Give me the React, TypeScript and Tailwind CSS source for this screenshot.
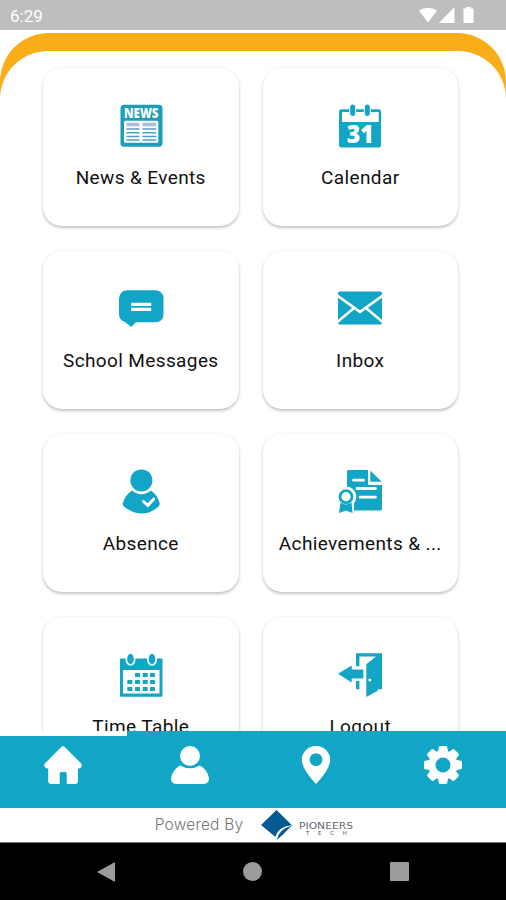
import type { ReactNode } from "react";

const TEAL = "#12a6c6";

const NewsIcon = () => (
  <svg viewBox="0 0 44 44" className="size-11 overflow-visible">
    <rect x="1.5" y="0.8" width="42" height="42" rx="3.5" fill="#1b9dbd" />
    <text
      x="5"
      y="13.6"
      fontFamily="Open Sans, sans-serif"
      fontSize="13.5"
      fontWeight="800"
      fill="#fff"
      textLength="34.5"
      lengthAdjust="spacingAndGlyphs"
    >
      NEWS
    </text>
    <rect x="5" y="16.7" width="34.3" height="22" rx="1.5" fill="#fff" />
    <path d="M7.5 20.5h13M23.5 20.5h13.7" stroke="#a5bfdd" strokeWidth="3.6" />
    <path
      d="M7.5 25h13M23.5 25h13.7M7.5 28.7h13M23.5 28.7h13.7M7.5 32.4h13M23.5 32.4h13.7M7.5 36h13M23.5 36h13.7"
      stroke="#4ba3bd"
      strokeWidth="1.5"
    />
  </svg>
);

const CalendarIcon = () => (
  <svg viewBox="0 0 44 44" className="size-11 overflow-visible">
    <rect x="1" y="5.2" width="42" height="38.2" rx="2.5" fill={TEAL} />
    <rect x="4" y="8" width="36.7" height="10" fill="#fff" />
    {[14.7, 29.3].map((x) => (
      <rect
        key={x}
        x={x - 3}
        y="0"
        width="6"
        height="12.5"
        rx="3"
        fill={TEAL}
        stroke="#fff"
        strokeWidth="1"
      />
    ))}
    <text
      x="8.7"
      y="38.7"
      fontFamily="Open Sans, sans-serif"
      fontSize="24"
      fontWeight="800"
      fill="#fff"
      textLength="27"
      lengthAdjust="spacingAndGlyphs"
    >
      31
    </text>
  </svg>
);

const MessageIcon = () => (
  <svg viewBox="0 0 44 44" className="size-11 overflow-visible">
    <path
      d="M8 3.3h28.5a8 8 0 0 1 8 7V28a7.5 7.5 0 0 1-7.5 7.3H17L12.2 40 6 35Q0 33 0 27V11.5a8 8 0 0 1 8-8.2z"
      fill={TEAL}
    />
    <path d="M12.2 17.4h20M12.2 22.4h20" stroke="#fff" strokeWidth="3.3" />
  </svg>
);

const InboxIcon = () => (
  <svg viewBox="0 0 44 44" className="size-11">
    <rect y="4.5" width="44" height="33" rx="1.5" fill={TEAL} />
    <path
      d="M-1 8.5 22 24.8 45 8.5M-1 35.2 15.5 21.5M45 35.2 28.5 21.5"
      fill="none"
      stroke="#fff"
      strokeWidth="2.6"
    />
  </svg>
);

const AbsenceIcon = () => (
  <svg viewBox="0 0 44 44" className="size-11 overflow-visible">
    <circle cx="22.4" cy="10.4" r="11" fill={TEAL} />
    <path
      d="M13 20.4q9.4 7.6 18.8 0 6.8 4.4 8.9 12.8.3 2-1.4 3.6-15.8 13.6-34.2 0-1.7-1.6-1.4-3.6 2.5-8.4 9.3-12.8z"
      fill={TEAL}
    />
    <path
      d="M24.5 31.5 28.8 35.3 34.8 29"
      fill="none"
      stroke="#fff"
      strokeWidth="3"
      strokeLinecap="round"
    />
  </svg>
);

const CertificateIcon = () => (
  <svg viewBox="0 0 44 44" className="size-11">
    <path
      d="M10.5 0H30v15h14v24a1.5 1.5 0 0 1-1.5 1.5H9V1.5A1.5 1.5 0 0 1 10.5 0z"
      fill={TEAL}
    />
    <path d="M32.3.5 43.7 11.8H32.3z" fill={TEAL} />
    <path
      d="M15.5 10.2h10M19 18.5h18.5M22 27.2h15.5"
      stroke="#fff"
      strokeWidth="2.8"
      strokeLinecap="round"
    />
    <circle cx="8" cy="26.7" r="10.3" fill="#fff" />
    <path d="M0 30h16v14H0z" fill="#fff" />
    <circle cx="8" cy="26.7" r="6" fill="none" stroke={TEAL} strokeWidth="2.8" />
    <path d="M2.5 32.5q5.5 4 11 0L14.5 43 8 40.5 1 43z" fill={TEAL} />
  </svg>
);

const TimeTableIcon = () => (
  <svg viewBox="0 0 44 44" className="size-11">
    <rect x="1" y="5.5" width="42.5" height="38.2" rx="1" fill={TEAL} />
    <rect x="4" y="17" width="36.5" height="23.5" fill="#fff" />
    {[11.5, 33].map((x) => (
      <ellipse
        key={x}
        cx={x}
        cy="6"
        rx="4.2"
        ry="6"
        fill={TEAL}
        stroke="#fff"
        strokeWidth="1.7"
      />
    ))}
    {[22, 29, 36].map((y, row) =>
      [10.8, 18.5, 26.2, 33.5].map(
        (x, col) =>
          !(row === 0 && col === 0) && (
            <rect
              key={`${x}-${y}`}
              x={x - 2.5}
              y={y - 2.1}
              width="5"
              height="4.2"
              rx="0.5"
              fill={TEAL}
            />
          )
      )
    )}
  </svg>
);

const LogoutIcon = () => (
  <svg viewBox="0 0 44 44" className="size-11">
    <path
      d="M18 .3h26v36h-4.3v1.4L28.3 44V11.2L38 3.5H21.4v9.8H18zM18 28h3.4v8.3H18z"
      fill={TEAL}
    />
    <path d="M0 20.7 13.7 12.5v4h11.7v9H13.7v4z" fill={TEAL} />
    <circle cx="31.8" cy="27" r="1.5" fill="#fff" />
  </svg>
);

const HomeIcon = () => (
  <svg viewBox="0 0 38 38" className="size-[38px]">
    <path
      d="M17.5.8q1.5-1.4 3 0l16.700 16.700q1.500 2-.5 4.200-.8.900-2.700.8V35q0 3-3 3h-8.300V27.500q0-1.500-1.500-1.500h-4q-1.500 0-1.500 1.500V38H7.200q-3 0-3-3V22.500q-2 .1-2.800-.8-2-2.200-.5-4.200z"
      fill="#fff"
    />
  </svg>
);

const ProfileIcon = () => (
  <svg viewBox="0 0 38 38" className="size-[38px]">
    <circle cx="19" cy="10" r="10" fill="#fff" />
    <path
      d="M9 19.5q10 5.500 20 0 7.500 4.500 9 12.500.3 6-6 6H6q-6.300 0-6-6 1.500-8 9-12.500z"
      fill="#fff"
    />
  </svg>
);

const PinIcon = () => (
  <svg viewBox="0 0 38 38" className="size-[38px]">
    <path
      fillRule="evenodd"
      d="M19 0a14 14 0 0 1 14.2 14Q33 23 19 38 5 23 4.8 14A14 14 0 0 1 19 0zm0 7.2a6.400 6.400 0 1 0 0 12.800 6.400 6.400 0 0 0 0-12.800z"
      fill="#fff"
    />
  </svg>
);

const SettingsIcon = () => (
  <svg viewBox="0 0 38 38" className="size-[38px]">
    {[0, 45, 90, 135, 180, 225, 270, 315].map((angle) => (
      <path
        key={angle}
        d="M13.500 8 14.800 1q.3-1 1.300-1h5.800q1 0 1.300 1l1.300 7z"
        transform={`rotate(${angle} 19 19)`}
        fill="#fff"
      />
    ))}
    <circle cx="19" cy="19" r="11" fill="none" stroke="#fff" strokeWidth="7" />
  </svg>
);

const PioneersLogo = () => (
  <svg viewBox="0 0 94 32" className="h-8 w-[94px]">
    <path d="M15.5 1 31 16.3Q17 18 14.500 28L0 16z" fill="#065a94" />
    <path d="M31 16.300Q18 20 15.800 31L22 25.500z" fill="#065a94" />
    <path d="M31 16.300Q16 18.500 14.300 29q4-8.500 16.700-12.700z" fill="#fff" />
    <text
      x="38"
      y="19.7"
      fontFamily="DejaVu Sans, sans-serif"
      fontSize="9.5"
      fill="#626873"
      textLength="54"
      lengthAdjust="spacingAndGlyphs"
    >
      PIONEERS
    </text>
    <text
      x="45"
      y="25.5"
      fontFamily="DejaVu Sans, sans-serif"
      fontSize="5.5"
      fill="#3f4550"
      textLength="41"
    >
      TECH
    </text>
  </svg>
);

interface MenuItem {
  label: string;
  icon: ReactNode;
}

const menuItems: MenuItem[] = [
  { label: "News & Events", icon: <NewsIcon /> },
  { label: "Calendar", icon: <CalendarIcon /> },
  { label: "School Messages", icon: <MessageIcon /> },
  { label: "Inbox", icon: <InboxIcon /> },
  { label: "Absence", icon: <AbsenceIcon /> },
  { label: "Achievements & ...", icon: <CertificateIcon /> },
  { label: "Time Table", icon: <TimeTableIcon /> },
  { label: "Logout", icon: <LogoutIcon /> },
];

const tabs = [
  { name: "home", icon: <HomeIcon /> },
  { name: "profile", icon: <ProfileIcon /> },
  { name: "location", icon: <PinIcon /> },
  { name: "settings", icon: <SettingsIcon /> },
];

function MenuCard({ label, icon }: MenuItem) {
  return (
    <li className="flex h-[158px] flex-col items-center rounded-[19px] bg-white pt-9 shadow-[0_2px_3px_rgba(0,0,0,0.22),0_0_4px_rgba(0,0,0,0.05)]">
      {icon}
      <span className="mt-[18px] text-center text-[19px] leading-6 tracking-[0.38px] whitespace-nowrap text-[#111]">
        {label}
      </span>
    </li>
  );
}

function StatusBar() {
  return (
    <div className="flex h-[30px] shrink-0 items-center justify-between bg-[#bebebe] pr-[32px] pl-2.5 text-white">
      <span className="pt-0.5 text-[17px] leading-6">6:29</span>
      <svg viewBox="0 0 55 16" className="h-4 w-[55px]">
        <path d="M0 3.5Q9 -2 18 3.500L9 15.500z" fill="#fff" />
        <path d="M35.500 0v16H20z" fill="#fff" />
        <path d="M47 0h5v1.500h2.500V16h-10V1.500H47z" fill="#fff" />
      </svg>
    </div>
  );
}

export default function App() {
  return (
    <div className="flex h-[900px] w-[506px] flex-col overflow-hidden bg-white font-[Roboto,sans-serif]">
      <StatusBar />
      <main className="mt-[2.5px] min-h-0 flex-1 overflow-hidden rounded-t-[49px] bg-[#f9ad19] pt-[18.5px]">
        <div className="h-full rounded-t-[48px] bg-white pt-[17px] pr-12 pl-[43px]">
          <ul className="grid grid-cols-2 gap-x-6 gap-y-[25px]">
            {menuItems.map((item) => (
              <MenuCard key={item.label} {...item} />
            ))}
          </ul>
        </div>
      </main>
      <nav className="grid h-[76.5px] shrink-0 grid-cols-4 bg-[#12a6c6]">
        {tabs.map((tab, index) => (
          <div
            key={tab.name}
            className={`flex justify-center ${
              index === 0 ? "border-t-[5px] border-white pt-2.5" : "pt-[15px]"
            }`}
          >
            {tab.icon}
          </div>
        ))}
      </nav>
      <footer className="flex h-[34.5px] shrink-0 items-center justify-center gap-[18px] bg-white pl-1">
        <span className="font-['Inter',sans-serif] text-[15.5px] font-light tracking-[0.2px] text-[#777]">
          Powered By
        </span>
        <PioneersLogo />
      </footer>
      <div className="flex h-[58px] shrink-0 items-center justify-between border-t border-[#777] bg-black px-[97px]">
        <svg viewBox="0 0 18 20" className="h-5 w-[18px]">
          <path d="M18 0v20L0 10z" fill="#9b9b9b" />
        </svg>
        <div className="size-[19px] rounded-full bg-[#9b9b9b]" />
        <div className="size-[19px] rounded-[1px] bg-[#9b9b9b]" />
      </div>
    </div>
  );
}
